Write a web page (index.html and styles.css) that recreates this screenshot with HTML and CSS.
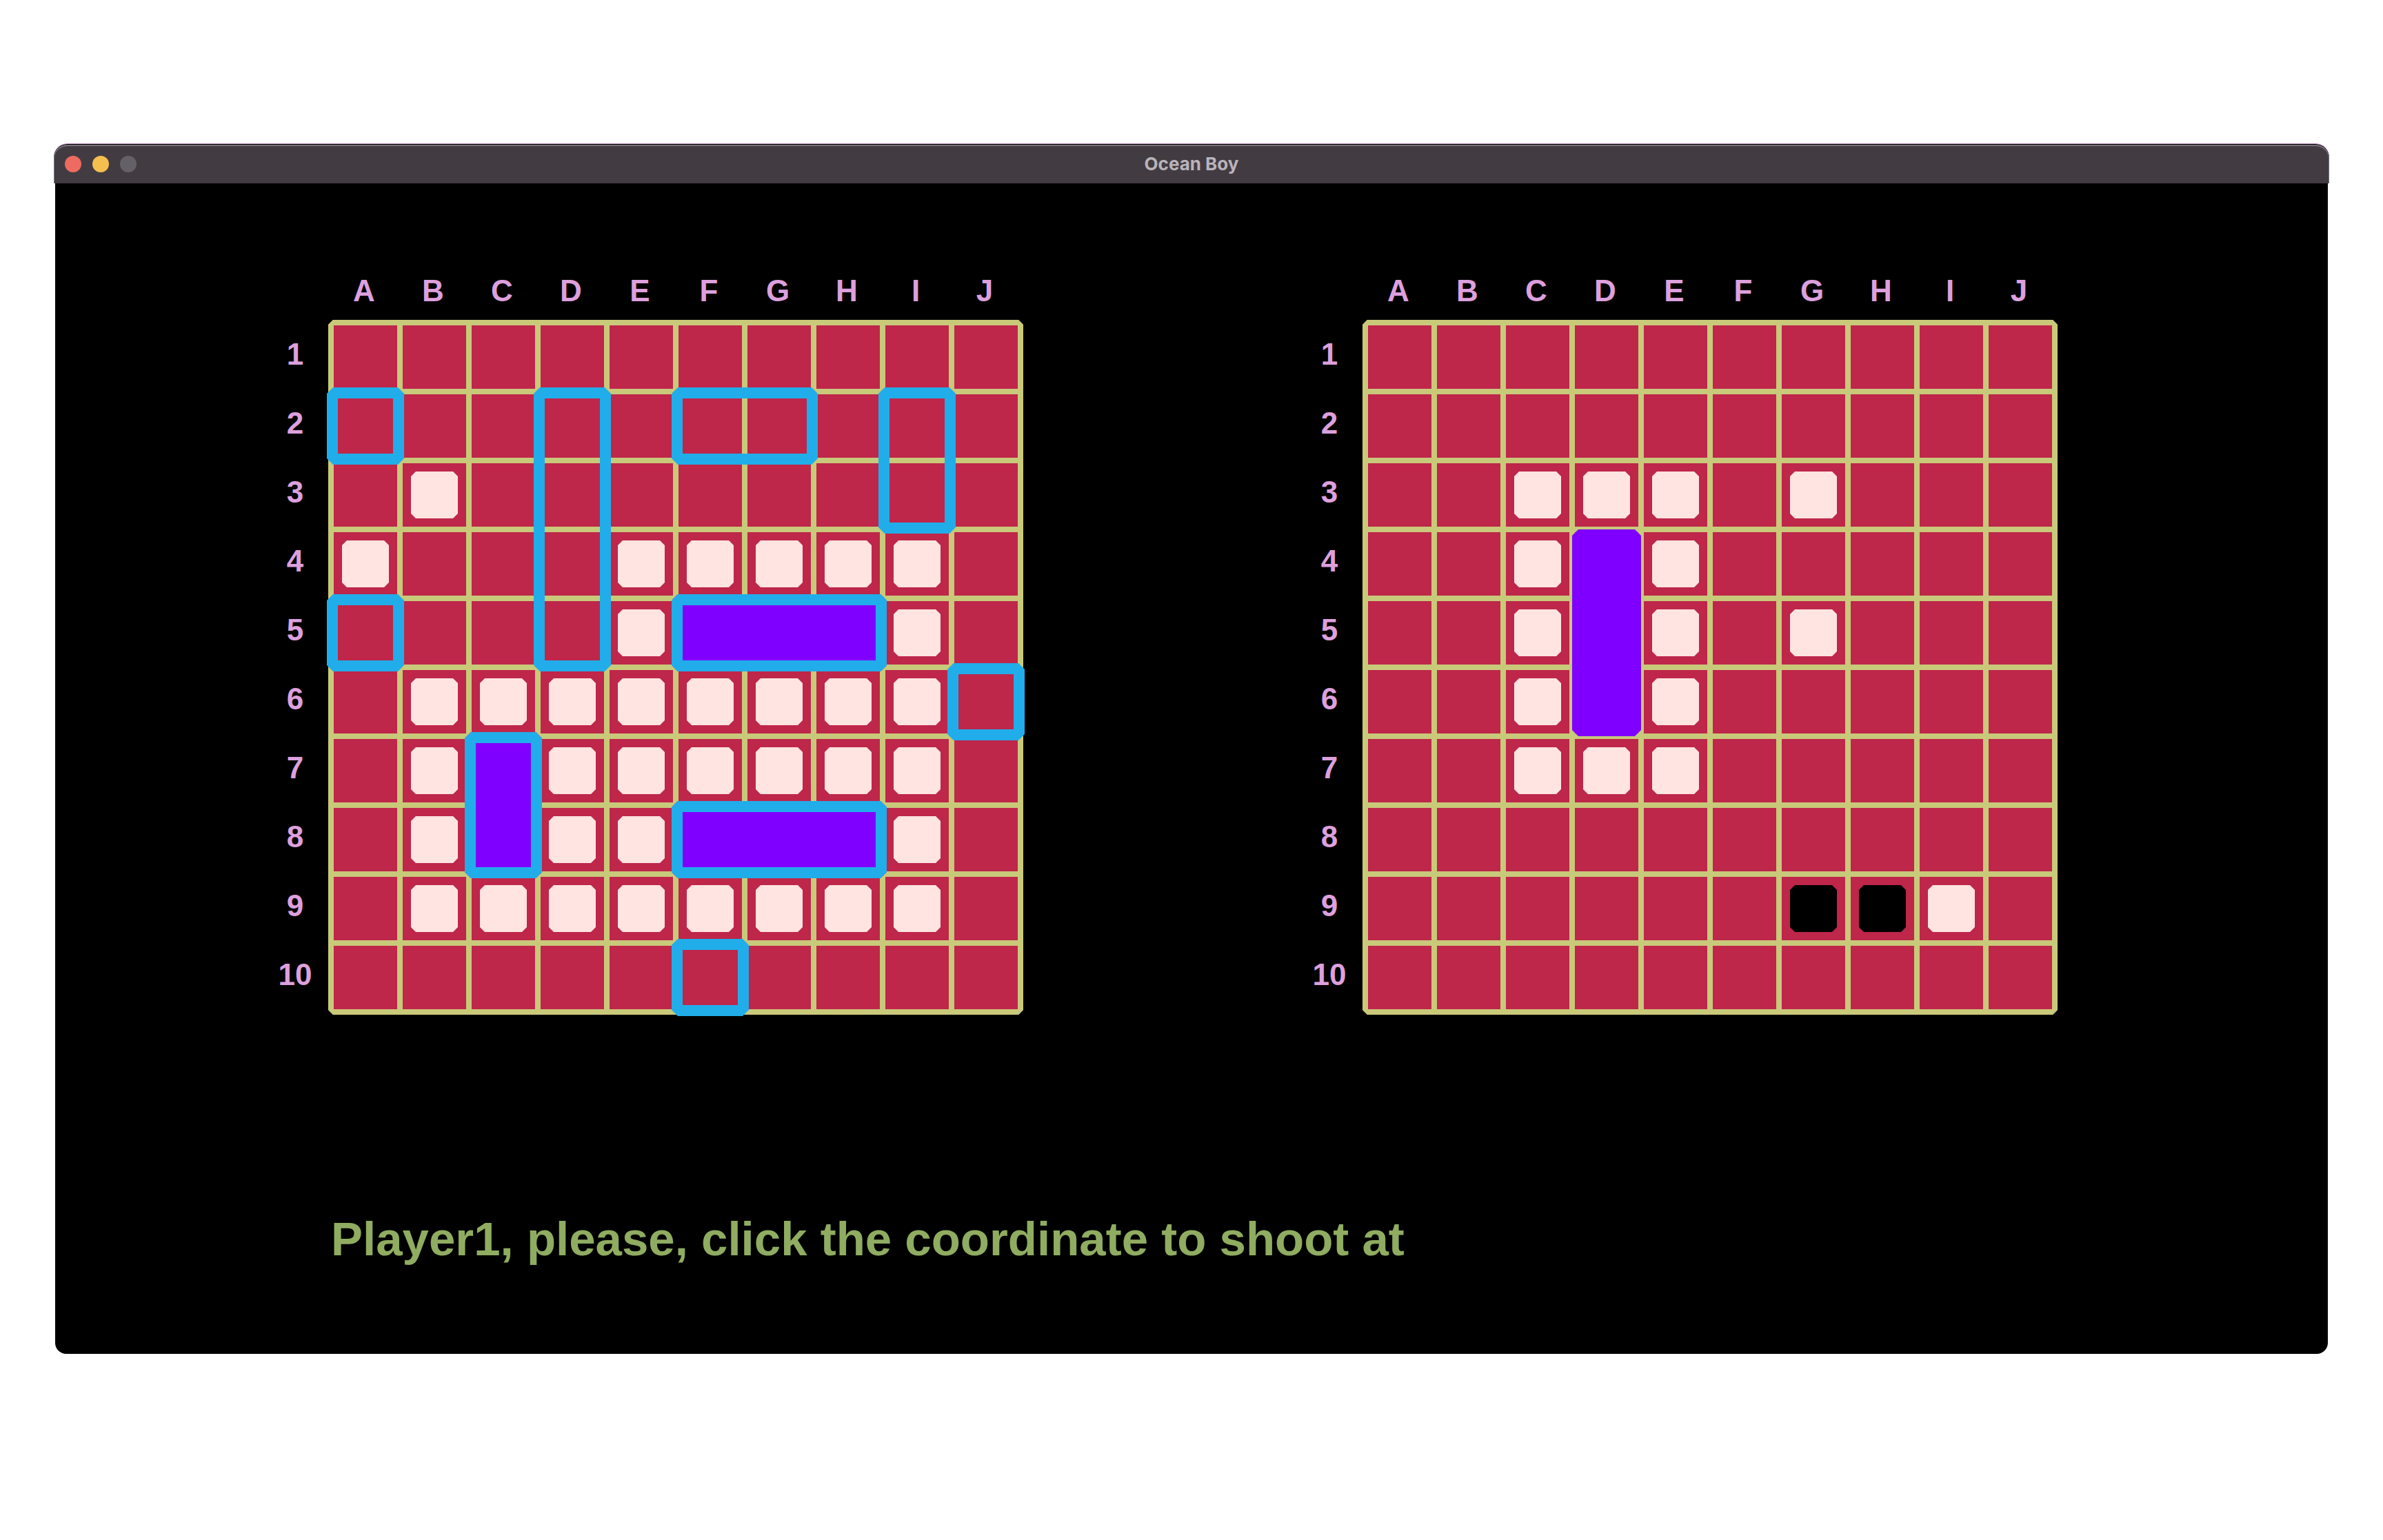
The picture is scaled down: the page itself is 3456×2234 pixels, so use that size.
FILE: index.html
```html
<!DOCTYPE html>
<html lang="en">
<head>
<meta charset="utf-8">
<title>Ocean Boy</title>
<link rel="stylesheet" href="styles.css">
</head>
<body>
<div class="window">
  <header class="titlebar">
    <div class="lights">
      <span class="light close"></span>
      <span class="light minimize"></span>
      <span class="light zoom"></span>
    </div>
    <h1 class="title">Ocean Boy</h1>
  </header>
  <main class="game">
    <div class="boards">
      <section class="board">
        <div class="letters">
          <span>A</span><span>B</span><span>C</span><span>D</span><span>E</span><span>F</span><span>G</span><span>H</span><span>I</span><span>J</span>
        </div>
        <div class="numbers">
          <span>1</span><span>2</span><span>3</span><span>4</span><span>5</span><span>6</span><span>7</span><span>8</span><span>9</span><span>10</span>
        </div>
        <div class="field">
          <i class="miss r3 cB"></i>
          <i class="miss r4 cA"></i><i class="miss r4 cE"></i><i class="miss r4 cF"></i><i class="miss r4 cG"></i><i class="miss r4 cH"></i><i class="miss r4 cI"></i>
          <i class="miss r5 cE"></i><i class="miss r5 cI"></i>
          <i class="miss r6 cB"></i><i class="miss r6 cC"></i><i class="miss r6 cD"></i><i class="miss r6 cE"></i><i class="miss r6 cF"></i><i class="miss r6 cG"></i><i class="miss r6 cH"></i><i class="miss r6 cI"></i>
          <i class="miss r7 cB"></i><i class="miss r7 cD"></i><i class="miss r7 cE"></i><i class="miss r7 cF"></i><i class="miss r7 cG"></i><i class="miss r7 cH"></i><i class="miss r7 cI"></i>
          <i class="miss r8 cB"></i><i class="miss r8 cD"></i><i class="miss r8 cE"></i><i class="miss r8 cI"></i>
          <i class="miss r9 cB"></i><i class="miss r9 cC"></i><i class="miss r9 cD"></i><i class="miss r9 cE"></i><i class="miss r9 cF"></i><i class="miss r9 cG"></i><i class="miss r9 cH"></i><i class="miss r9 cI"></i>
          <b class="ship own r2 cA"></b>
          <b class="ship own r2 cD tall4"></b>
          <b class="ship own r2 cF wide2"></b>
          <b class="ship own r2 cI tall2"></b>
          <b class="ship own r5 cA"></b>
          <b class="ship own sunk r5 cF wide3"></b>
          <b class="ship own r6 cJ"></b>
          <b class="ship own sunk r7 cC tall2"></b>
          <b class="ship own sunk r8 cF wide3"></b>
          <b class="ship own r10 cF"></b>
        </div>
      </section>
      <section class="board">
        <div class="letters">
          <span>A</span><span>B</span><span>C</span><span>D</span><span>E</span><span>F</span><span>G</span><span>H</span><span>I</span><span>J</span>
        </div>
        <div class="numbers">
          <span>1</span><span>2</span><span>3</span><span>4</span><span>5</span><span>6</span><span>7</span><span>8</span><span>9</span><span>10</span>
        </div>
        <div class="field">
          <i class="miss r3 cC"></i><i class="miss r3 cD"></i><i class="miss r3 cE"></i><i class="miss r3 cG"></i>
          <i class="miss r4 cC"></i><i class="miss r4 cE"></i>
          <i class="miss r5 cC"></i><i class="miss r5 cE"></i><i class="miss r5 cG"></i>
          <i class="miss r6 cC"></i><i class="miss r6 cE"></i>
          <i class="miss r7 cC"></i><i class="miss r7 cD"></i><i class="miss r7 cE"></i>
          <i class="hit r9 cG"></i><i class="hit r9 cH"></i><i class="miss r9 cI"></i>
          <b class="ship sunk r4 cD tall3"></b>
        </div>
      </section>
    </div>
    <p class="status">Player1, please, click the coordinate to shoot at</p>
  </main>
</div>
</body>
</html>
```
FILE: styles.css
```css
* {
  box-sizing: border-box;
}

body {
  margin: 0;
  padding: 210px 78px 0;
  background: #fff;
  font-family: "Liberation Sans", Arial, sans-serif;
}

/* Title bar */
.titlebar {
  display: grid;
  grid-template-columns: 1fr auto 1fr;
  align-items: center;
  height: 56px;
  padding: 0 16px;
  border-radius: 20px 20px 0 0;
  background: #423c42;
  box-shadow: inset 0 2px 0 #77717a, inset 1px 0 0 #77717a, inset -1px 0 0 #77717a, 0 -1px 0 #000, 0 -2px 0 #b98ab6;
}

.lights {
  display: flex;
  gap: 16px;
}

.light {
  width: 24px;
  height: 24px;
  border-radius: 50%;
}

.close { background: #ed6b60; }
.minimize { background: #f5bf4f; }
.zoom { background: #656067; }

.title {
  margin: 0;
  color: #bab3ba;
  font-family: Inter, sans-serif;
  font-size: 26px;
  font-weight: 700;
  line-height: 32px;
}

/* Game area */
.game {
  margin: 0 2px;
  padding: 102px 0 126px 300px;
  border-radius: 0 0 16px 16px;
  background: #000;
}

.boards {
  display: flex;
  gap: 400px;
}

.board {
  display: grid;
  grid-template-columns: 100px 1000px;
  grid-template-rows: 100px 1000px;
  color: #dda0dd;
  font-size: 44px;
  font-weight: 700;
  line-height: 92px;
  text-align: center;
}

.letters {
  grid-column: 2;
  display: grid;
  grid-template-columns: repeat(10, 100px);
  padding-top: 8px;
}

.numbers {
  display: grid;
  grid-template-rows: repeat(10, 100px);
}

.letters span,
.numbers span {
  padding-right: 4px;
}

.field {
  position: relative;
  display: grid;
  grid-template: repeat(10, 100px) / repeat(10, 100px);
  margin: -4px;
  padding: 4px;
}

/* Grid lines are 8px wide and centred on the cell edges */
.field::before {
  content: "";
  position: absolute;
  inset: 0;
  background:
    repeating-linear-gradient(to right, #c9c97a 0 8px, transparent 8px 100px),
    repeating-linear-gradient(to bottom, #c9c97a 0 8px, #be264a 8px 100px);
  clip-path: polygon(7px 0, calc(100% - 7px) 0, 100% 7px, 100% calc(100% - 7px), calc(100% - 7px) 100%, 7px 100%, 0 calc(100% - 7px), 0 7px);
}

.miss,
.hit {
  z-index: 1;
  margin: 16px;
  clip-path: polygon(7px 0, calc(100% - 7px) 0, 100% 7px, 100% calc(100% - 7px), calc(100% - 7px) 100%, 7px 100%, 0 calc(100% - 7px), 0 7px);
}

.miss { background: #ffe4e1; }
.hit { background: #000; }

.ship {
  z-index: 2;
  clip-path: polygon(9px 0, calc(100% - 9px) 0, 100% 9px, 100% calc(100% - 9px), calc(100% - 9px) 100%, 9px 100%, 0 calc(100% - 9px), 0 9px);
}

.own {
  margin: -6px;
  border: 16px solid #21adea;
}

.sunk { background: #8000ff; }

.r2 { grid-row-start: 2; }
.r3 { grid-row-start: 3; }
.r4 { grid-row-start: 4; }
.r5 { grid-row-start: 5; }
.r6 { grid-row-start: 6; }
.r7 { grid-row-start: 7; }
.r8 { grid-row-start: 8; }
.r9 { grid-row-start: 9; }
.r10 { grid-row-start: 10; }

.cA { grid-column-start: 1; }
.cB { grid-column-start: 2; }
.cC { grid-column-start: 3; }
.cD { grid-column-start: 4; }
.cE { grid-column-start: 5; }
.cF { grid-column-start: 6; }
.cG { grid-column-start: 7; }
.cH { grid-column-start: 8; }
.cI { grid-column-start: 9; }
.cJ { grid-column-start: 10; }

.wide2 { grid-column-end: span 2; }
.wide3 { grid-column-end: span 3; }
.tall2 { grid-row-end: span 2; }
.tall3 { grid-row-end: span 3; }
.tall4 { grid-row-end: span 4; }

.status {
  margin: 290px 0 0 100px;
  color: #8fac60;
  font-size: 69px;
  font-weight: 700;
  line-height: 80px;
}
```
